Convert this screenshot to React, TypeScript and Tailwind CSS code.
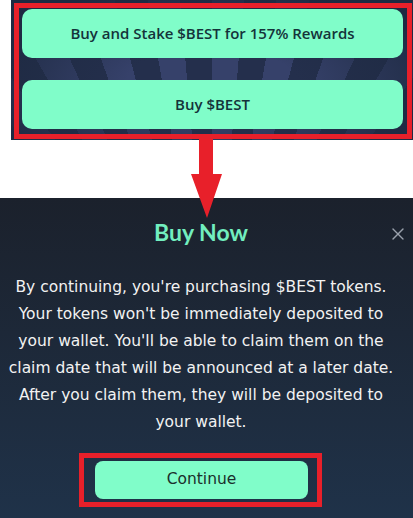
import { X } from 'lucide-react';

const mint = 'bg-[#80fdc9]';

const StakeButtons = () => (
  <div className="ml-[11px] h-[140px] w-[402px] bg-[#222d48] bg-[radial-gradient(ellipse_at_50%_60%,transparent_30%,#1e2a42_85%),repeating-conic-gradient(from_-95deg_at_50%_260%,#242f4c_0deg_5deg,#36416a_5deg_10deg)] pt-[3px] pl-[3px]">
    <div className="flex h-[136px] w-[398px] flex-col gap-[22px] border-[5px] border-[#e8202a] px-[3px] pt-[1px]">
      <button className={`${mint} h-[49px] w-[381px] rounded-[10px] text-[15px] font-semibold text-[#14333a]`}>
        Buy and Stake $BEST for 157% Rewards
      </button>
      <button className={`${mint} h-[49px] w-[381px] rounded-[10px] text-[15px] font-semibold text-[#14333a]`}>
        Buy $BEST
      </button>
    </div>
  </div>
);

const Arrow = () => (
  <svg
    className="absolute left-[189px] top-[139px]"
    width="36"
    height="80"
    viewBox="0 0 36 80">
    <path d="M10 0 H24 V35 H33 L18 79 L2 35 H10 Z" fill="#e8202a" />
  </svg>
);

const BuyNowModal = () => (
  <div className="relative mt-[58px] h-[320px] w-full bg-gradient-to-b from-[#1b212c] to-[#1f3249]">
    <div className="flex w-[402px] flex-col items-center">
      <h2 className="mt-[19px] font-['Lato',sans-serif] text-[23px] font-bold leading-[30px] text-[#72eebf]">
        Buy Now
      </h2>
      <p className="mt-[27px] text-center font-['DejaVu_Sans',sans-serif] text-[15.5px] leading-[27px] text-[#f2f2f2]">
        By continuing, you're purchasing $BEST tokens.
        <br />
        Your tokens won't be immediately deposited to
        <br />
        your wallet. You'll be able to claim them on the
        <br />
        claim date that will be announced at a later date.
        <br />
        After you claim them, they will be deposited to
        <br />
        your wallet.
      </p>
      <div className="mt-[17px] ml-[-1px] border-[5px] border-[#e8202a] py-[3px] pl-[11px] pr-[9px]">
        <button className={`${mint} h-[38px] w-[213px] rounded-[8px] font-['DejaVu_Sans',sans-serif] text-[15.5px] text-[#1a2f2c]`}>
          Continue
        </button>
      </div>
    </div>
    <X
      className="absolute right-[5px] top-[26px] text-[#9aa1ac]"
      size={20}
      strokeWidth={1.6}
    />
  </div>
);

export default function App() {
  return (
    <div className="relative h-[518px] w-[413px] overflow-hidden bg-white font-['Open_Sans',sans-serif]">
      <StakeButtons />
      <BuyNowModal />
      <Arrow />
    </div>
  );
}
